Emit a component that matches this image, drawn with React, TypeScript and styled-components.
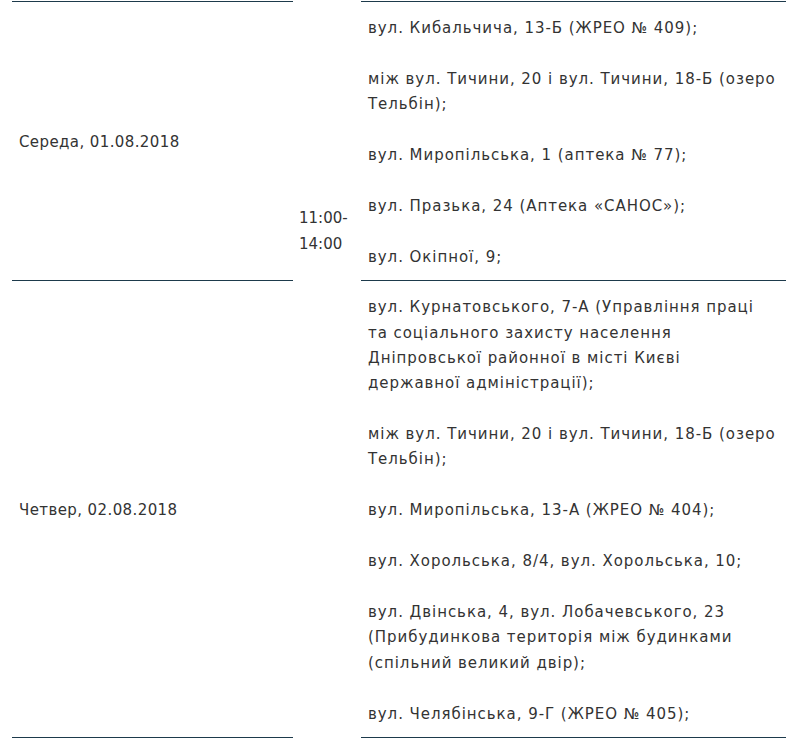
import React from "react";
import styled, { createGlobalStyle } from "styled-components";

const Global = createGlobalStyle`
  html, body { margin: 0; padding: 0; background: #ffffff; }
  body { font-family: "DejaVu Sans", "Noto Sans", sans-serif; color: #333333; }
`;

const Table = styled.div`
  display: grid;
  grid-template-columns: 281px 68px 425px;
  grid-template-rows: auto auto;
  padding: 1px 0 0 12px;
  font-size: 15px;
  line-height: 25.2px;
`;

const Cell = styled.div<{ $top?: boolean; $col: number; $row: number }>`
  grid-column: ${(p) => p.$col};
  grid-row: ${(p) => p.$row};
  border-bottom: 1px solid #1d3a4b;
  border-top: ${(p) => (p.$top ? "1px solid #1d3a4b" : "none")};
`;

const DateCell = styled(Cell)`
  display: flex;
  align-items: center;
  padding: 2px 7px 0;
  letter-spacing: 0.4px;
`;

const AddrCell = styled(Cell)`
  padding: 14px 7px 10px;
  display: flex;
  flex-direction: column;
  gap: 25.8px;
  letter-spacing: 0.95px;
`;

const TimeCell = styled.div`
  grid-column: 2;
  grid-row: 1;
  align-self: end;
  padding: 0 6px 24px;
  line-height: 26px;
  letter-spacing: 0;
`;

const Para = styled.p`
  margin: 0;
  white-space: nowrap;
`;

const rows = [
  {
    date: "Середа, 01.08.2018",
    items: [
      ["вул. Кибальчича, 13-Б (ЖРЕО № 409);"],
      ["між вул. Тичини, 20 і вул. Тичини, 18-Б (озеро", "Тельбін);"],
      ["вул. Миропільська, 1 (аптека № 77);"],
      ["вул. Празька, 24 (Аптека «САНОС»);"],
      ["вул. Окіпної, 9;"],
    ],
  },
  {
    date: "Четвер, 02.08.2018",
    items: [
      [
        "вул. Курнатовського, 7-А (Управління праці",
        "та соціального захисту населення",
        "Дніпровської районної в місті Києві",
        "державної адміністрації);",
      ],
      ["між вул. Тичини, 20 і вул. Тичини, 18-Б (озеро", "Тельбін);"],
      ["вул. Миропільська, 13-А (ЖРЕО № 404);"],
      ["вул. Хорольська, 8/4, вул. Хорольська, 10;"],
      [
        "вул. Двінська, 4, вул. Лобачевського, 23",
        "(Прибудинкова територія між будинками",
        "(спільний великий двір);",
      ],
      ["вул. Челябінська, 9-Г (ЖРЕО № 405);"],
    ],
  },
];

export default function App() {
  return (
    <>
      <Global />
      <Table>
        {rows.map((r, i) => (
          <React.Fragment key={r.date}>
            <DateCell $col={1} $row={i + 1} $top={i === 0}>
              {r.date}
            </DateCell>
            <AddrCell $col={3} $row={i + 1} $top={i === 0}>
              {r.items.map((lines, j) => (
                <Para key={j}>
                  {lines.map((l, k) => (
                    <React.Fragment key={k}>
                      {k > 0 && <br />}
                      {l}
                    </React.Fragment>
                  ))}
                </Para>
              ))}
            </AddrCell>
          </React.Fragment>
        ))}
        <TimeCell>
          11:00-
          <br />
          14:00
        </TimeCell>
      </Table>
    </>
  );
}
